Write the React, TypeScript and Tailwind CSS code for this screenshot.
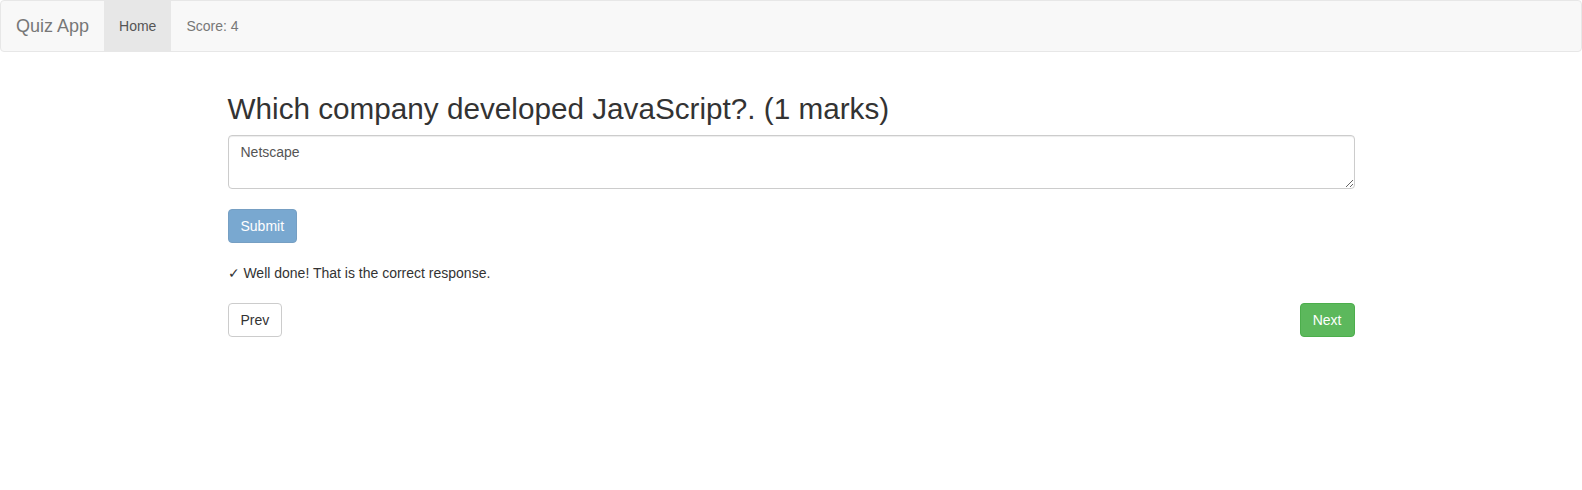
export default function App() {
  return (
    <div className="min-h-[490px] bg-white text-[14px] leading-[20px] text-[#333]" style={{ fontFamily: '"Liberation Sans", Arial, sans-serif' }}>
      <nav className="flex h-[52px] rounded-[4px] border border-[#e7e7e7] bg-[#f8f8f8]">
        <div className="flex items-center px-[15px] text-[18px] leading-[20px] text-[#777]">Quiz App</div>
        <div className="flex items-center bg-[#e7e7e7] px-[15px] text-[#555]">Home</div>
        <div className="flex items-center px-[15px] text-[#777]">Score: 4</div>
      </nav>
      <div className="mx-auto w-[1127px] pt-[40px]">
        <h2 className="mb-[10px] text-[29.7px] leading-[33px] font-normal text-[#333]">
          Which company developed JavaScript?. (1 marks)
        </h2>
        <textarea
          rows={2}
          defaultValue="Netscape"
          className="block h-[54px] w-full rounded-[4px] border border-[#ccc] px-[12px] py-[6px] text-[14px] leading-[20px] text-[#555] shadow-[inset_0_1px_1px_rgba(0,0,0,0.075)] outline-none"
        />
        <button
          disabled
          className="mt-[20px] h-[34px] rounded-[4px] border border-[#2e6da4] bg-[#337ab7] px-[12px] text-[14px] text-white opacity-65"
        >
          Submit
        </button>
        <p className="mt-[20px] mb-0 leading-[20px] text-[#333]">✓ Well done! That is the correct response.</p>
        <div className="mt-[20px] flex justify-between">
          <button className="h-[34px] rounded-[4px] border border-[#ccc] bg-white px-[12px] text-[14px] text-[#333]">Prev</button>
          <button className="h-[34px] rounded-[4px] border border-[#4cae4c] bg-[#5cb85c] px-[12px] text-[14px] text-white">Next</button>
        </div>
      </div>
    </div>
  );
}
